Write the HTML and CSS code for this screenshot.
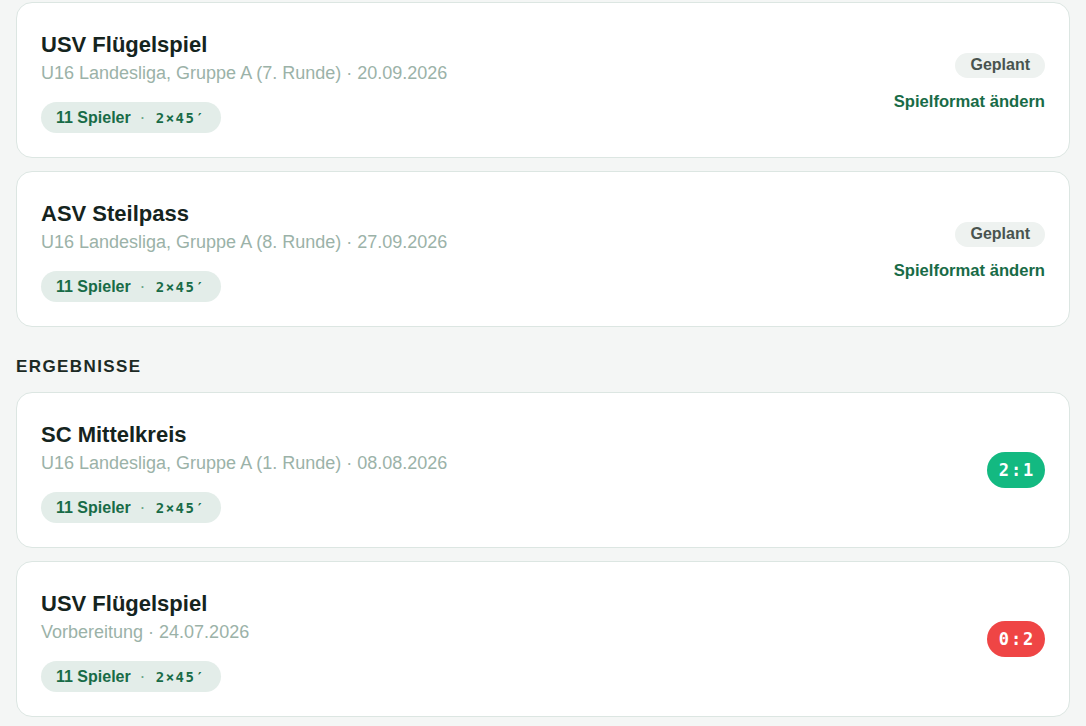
FILE: index.html
```html
<!DOCTYPE html>
<html lang="de">
<head>
<meta charset="utf-8">
<title>Spiele</title>
<link rel="stylesheet" href="styles.css">
</head>
<body>
<main class="page">
  <section class="list">
    <article class="card">
      <div class="info">
        <h2 class="team">USV Flügelspiel</h2>
        <p class="meta">U16 Landesliga, Gruppe A (7. Runde) · 20.09.2026</p>
        <span class="format"><span class="players">11 Spieler</span><span class="dot">·</span><span class="time">2×45′</span></span>
      </div>
      <div class="side">
        <span class="status">Geplant</span>
        <a class="edit" href="#">Spielformat ändern</a>
      </div>
    </article>
    <article class="card">
      <div class="info">
        <h2 class="team">ASV Steilpass</h2>
        <p class="meta">U16 Landesliga, Gruppe A (8. Runde) · 27.09.2026</p>
        <span class="format"><span class="players">11 Spieler</span><span class="dot">·</span><span class="time">2×45′</span></span>
      </div>
      <div class="side">
        <span class="status">Geplant</span>
        <a class="edit" href="#">Spielformat ändern</a>
      </div>
    </article>
  </section>

  <h3 class="section-title">ERGEBNISSE</h3>

  <section class="list">
    <article class="card">
      <div class="info">
        <h2 class="team">SC Mittelkreis</h2>
        <p class="meta">U16 Landesliga, Gruppe A (1. Runde) · 08.08.2026</p>
        <span class="format"><span class="players">11 Spieler</span><span class="dot">·</span><span class="time">2×45′</span></span>
      </div>
      <div class="side">
        <span class="score win">2:1</span>
      </div>
    </article>
    <article class="card">
      <div class="info">
        <h2 class="team">USV Flügelspiel</h2>
        <p class="meta">Vorbereitung · 24.07.2026</p>
        <span class="format"><span class="players">11 Spieler</span><span class="dot">·</span><span class="time">2×45′</span></span>
      </div>
      <div class="side">
        <span class="score loss">0:2</span>
      </div>
    </article>
  </section>
</main>
</body>
</html>
```

FILE: styles.css
```css
* { box-sizing: border-box; }

html, body {
  margin: 0;
  background: #f4f6f5;
}

body {
  font-family: "Liberation Sans", Arial, Helvetica, sans-serif;
  color: #15241e;
}

.page {
  padding: 2px 16px 9px 16px;
  display: flex;
  flex-direction: column;
}

.list {
  display: flex;
  flex-direction: column;
  gap: 13px;
}

.card {
  background: #ffffff;
  border: 1px solid #dce6e2;
  border-radius: 16px;
  padding: 24px;
  display: flex;
  align-items: center;
  justify-content: space-between;
  height: 156px;
}

.info {
  align-self: stretch;
  display: flex;
  flex-direction: column;
  align-items: flex-start;
}

.team {
  margin: 0;
  padding-top: 4px;
  font-size: 22px;
  line-height: 28px;
  font-weight: 700;
  color: #15241e;
}

.meta {
  margin: 0;
  font-size: 18px;
  line-height: 28px;
  color: #9bb2a8;
}

.format {
  margin-top: auto;
  display: inline-flex;
  align-items: center;
  height: 31px;
  padding: 0 16px 0 15px;
  border-radius: 999px;
  background: #e3ede9;
  color: #186b47;
  font-weight: 700;
}

.players {
  font-size: 16px;
}

.dot {
  margin: 0 11px 0 10px;
  font-size: 12px;
  color: #6da58b;
}

.time {
  font-family: "DejaVu Sans Mono", "Liberation Mono", monospace;
  font-size: 14px;
  letter-spacing: 1.5px;
}

.side {
  display: flex;
  flex-direction: column;
  align-items: flex-end;
  gap: 14px;
}

.status {
  margin-top: 4px;
  display: inline-flex;
  align-items: center;
  height: 25px;
  padding: 0 15px;
  border-radius: 999px;
  background: #eef2f0;
  color: #49544f;
  font-size: 16px;
  font-weight: 700;
}

.edit {
  color: #186b47;
  font-size: 16.6px;
  font-weight: 700;
  text-decoration: none;
}

.section-title {
  margin: 30px 0 15px 0;
  font-size: 17px;
  line-height: 20px;
  font-weight: 700;
  letter-spacing: 1.4px;
  color: #1c2a24;
}

.score {
  display: inline-flex;
  align-items: center;
  justify-content: center;
  height: 36px;
  width: 58px;
  padding-left: 2px;
  border-radius: 999px;
  color: #ffffff;
  font-family: "DejaVu Sans Mono", "Liberation Mono", monospace;
  font-size: 17px;
  font-weight: 700;
  letter-spacing: 2px;
}

.score.win { background: #13b981; }
.score.loss { background: #ef4545; }
```
